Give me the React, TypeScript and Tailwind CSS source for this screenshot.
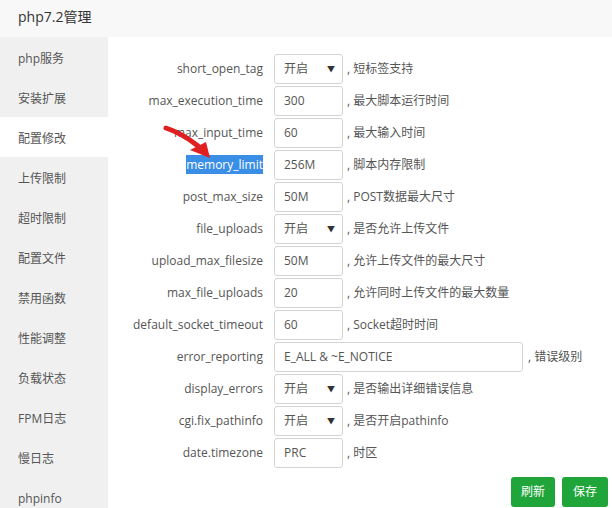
import { useState } from 'react'

type Row = {
  name: string
  value: string
  desc: string
  type?: 'select' | 'wide'
}

const rows: Row[] = [
  { name: 'short_open_tag', value: '开启', desc: '短标签支持', type: 'select' },
  { name: 'max_execution_time', value: '300', desc: '最大脚本运行时间' },
  { name: 'max_input_time', value: '60', desc: '最大输入时间' },
  { name: 'memory_limit', value: '256M', desc: '脚本内存限制' },
  { name: 'post_max_size', value: '50M', desc: 'POST数据最大尺寸' },
  { name: 'file_uploads', value: '开启', desc: '是否允许上传文件', type: 'select' },
  { name: 'upload_max_filesize', value: '50M', desc: '允许上传文件的最大尺寸' },
  { name: 'max_file_uploads', value: '20', desc: '允许同时上传文件的最大数量' },
  { name: 'default_socket_timeout', value: '60', desc: 'Socket超时时间' },
  { name: 'error_reporting', value: 'E_ALL & ~E_NOTICE', desc: '错误级别', type: 'wide' },
  { name: 'display_errors', value: '开启', desc: '是否输出详细错误信息', type: 'select' },
  { name: 'cgi.fix_pathinfo', value: '开启', desc: '是否开启pathinfo', type: 'select' },
  { name: 'date.timezone', value: 'PRC', desc: '时区' },
]

const menu = ['php服务', '安装扩展', '配置修改', '上传限制', '超时限制', '配置文件', '禁用函数', '性能调整', '负载状态', 'FPM日志', '慢日志', 'phpinfo']

function Field({ row }: { row: Row }) {
  if (row.type === 'select') {
    return (
      <div className="w-[69px] h-[30px] border border-[#d4d4d4] rounded-[3px] flex items-center justify-between pl-[9px] pr-[7px] bg-white">
        <span>{row.value}</span>
        <span className="text-[8px] text-[#333]">▼</span>
      </div>
    )
  }
  return (
    <div
      className={`${row.type === 'wide' ? 'w-[249px]' : 'w-[69px]'} h-[30px] border border-[#d4d4d4] rounded-[3px] flex items-center pl-[9px] bg-white`}
    >
      {row.value}
    </div>
  )
}

export default function App() {
  const [active] = useState('配置修改')

  return (
    <div
      className="w-[612px] h-[508px] overflow-hidden bg-white relative text-[12px] text-[#555]"
      style={{ fontFamily: '"Open Sans", "Noto Sans CJK SC", sans-serif' }}
    >
      {/* Header */}
      <div className="h-[37px] bg-[#f8f8f8] flex items-center pl-[18px] pb-[4px] text-[14px] text-[#333]">php7.2管理</div>

      <div className="flex">
        {/* Sidebar */}
        <div className="w-[108px] bg-[#f0f0f0] shrink-0">
          {menu.map(m => (
            <div
              key={m}
              className={`h-10 flex items-center pl-[18px] pt-[3px] ${m === active ? 'bg-white' : ''}`}
            >
              {m}
            </div>
          ))}
        </div>

        {/* Form */}
        <div className="flex-1 pt-[16px]">
          {rows.map(r => (
            <div key={r.name} className="h-[32px] flex items-center">
              <div className="w-[155px] text-right shrink-0">
                {r.name === 'memory_limit' ? (
                  <span className="bg-[#3a8ee6] text-white py-[1px]">{r.name}</span>
                ) : (
                  r.name
                )}
              </div>
              <div className="ml-[11px]">
                <Field row={r} />
              </div>
              <span className={r.type === 'wide' ? 'ml-[5px]' : 'ml-[4px]'}>, {r.desc}</span>
            </div>
          ))}

          <div className="flex justify-end gap-[7px] pr-[4px] mt-[8px]">
            <button className="h-[30px] px-[10px] rounded-[3px] bg-[#20a53a] text-white">刷新</button>
            <button className="h-[30px] px-[11px] rounded-[3px] bg-[#20a53a] text-white">保存</button>
          </div>
        </div>
      </div>

      {/* red arrow pointing at memory_limit */}
      <svg className="absolute left-[160px] top-[124px]" width="60" height="38" viewBox="0 0 60 38">
        <path d="M6 4 C18 8 28 14 38 22" stroke="#e02020" strokeWidth="5" fill="none" strokeLinecap="round" />
        <polygon points="30,26 46,18 50,34" fill="#e02020" />
      </svg>
    </div>
  )
}
